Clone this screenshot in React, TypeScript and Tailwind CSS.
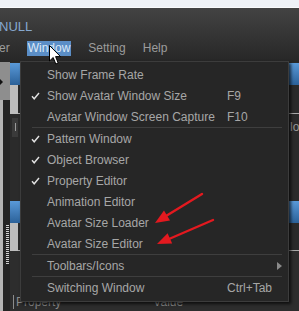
import React from "react";

type Item =
  | { sep: true }
  | { label: string; check?: boolean; sc?: string; sub?: boolean };

const items: Item[] = [
  { label: "Show Frame Rate" },
  { label: "Show Avatar Window Size", check: true, sc: "F9" },
  { label: "Avatar Window Screen Capture", sc: "F10" },
  { sep: true },
  { label: "Pattern Window", check: true },
  { label: "Object Browser", check: true },
  { label: "Property Editor", check: true },
  { label: "Animation Editor" },
  { label: "Avatar Size Loader" },
  { label: "Avatar Size Editor" },
  { sep: true },
  { label: "Toolbars/Icons", sub: true },
  { sep: true },
  { label: "Switching Window", sc: "Ctrl+Tab" },
];

function Check() {
  return (
    <svg width="9" height="8" viewBox="0 0 9 8">
      <path d="M1 4.2 L3.2 6.8 L8 1" fill="none" stroke="#e2e2e2" strokeWidth="1.4" />
    </svg>
  );
}

export default function App() {
  return (
    <div
      className="relative w-[299px] h-[311px] overflow-hidden bg-[#2a2a2a] flex flex-col"
      style={{ fontFamily: '"Liberation Sans", Arial, sans-serif' }}
    >
      {/* top light strip */}
      <div className="h-[7px] bg-[#eef1f6]" />
      <div className="h-px bg-[#f9fafc]" />
      {/* header */}
      <div className="h-[54px] bg-gradient-to-b from-[#434343] to-[#272727] flex flex-col">
        <div className="pt-[11px] pl-0 text-[13px] leading-[16px] text-[#86a8cf] -ml-px">NULL</div>
        <div className="mt-[6px] flex items-center gap-[17px] text-[12px] leading-[15px] text-[#9c9c9c]">
          <span className="-ml-px">er</span>
          <span className="bg-[#5b8ec6] text-[#dce9f7] px-[1px] h-[15px]">Window</span>
          <span>Setting</span>
          <span>Help</span>
        </div>
      </div>
      {/* body */}
      <div className="flex-1 flex flex-row">
        <div className="w-[11px] flex flex-col">
          <div className="h-[38px] w-[10px] bg-[#8e8e8e] flex items-center">
            <div className="mt-[2px] w-0 h-0 border-y-[3px] border-y-transparent border-l-[3px] border-l-[#111]" />
          </div>
          <div className="flex-1 flex flex-row">
            <div className="w-[3px] bg-[#b4b4b4]" />
            <div className="flex-1 bg-[#242424] flex flex-col">
              <div className="mt-[125px] ml-[3px] w-[3px] h-[40px] bg-[repeating-linear-gradient(to_bottom,#cfcfcf_0px,#cfcfcf_1px,transparent_1px,transparent_2px)]" />
            </div>
          </div>
        </div>
        <div className="flex-1 flex flex-col">
          <div className="mt-px h-[22px] bg-gradient-to-b from-[#5a9ad9] to-[#2b6199]" />
          <div className="h-[29px] flex flex-row">
            <div className="w-[8px] bg-[#bdbdbd]" />
            <div className="flex-1 border-b border-[#a9a9a9]" />
          </div>
          <div className="h-[26px] flex flex-row items-center">
            <div className="ml-[2px] w-[6px] h-[19px] bg-[#3a3a3a] flex items-center justify-center">
              <div className="w-px h-[8px] bg-[#9a9a9a]" />
            </div>
            <span className="ml-[272px] text-[12px] text-[#9a9a9a] whitespace-nowrap">lo</span>
          </div>
          <div className="flex-1 bg-[#2b2b2b]" />
          <div className="h-[22px] bg-gradient-to-b from-[#5a9ad9] to-[#2b6199]" />
          <div className="h-[28px] flex flex-row">
            <div className="w-[8px] bg-[#bdbdbd]" />
            <div className="flex-1 border-b border-[#a9a9a9]" />
          </div>
          <div className="flex-1 flex flex-row items-end pb-0 text-[12px] leading-[14px] text-[#8c8c8c] bg-[#2d2d2d]">
            <div className="ml-[3px] w-px h-[14px] bg-[#8c8c8c] mb-[2px]" />
            <span className="ml-[2px] mb-[2px]">Property</span>
            <span className="ml-[92px] mb-[2px]">Value</span>
          </div>
        </div>
      </div>

      {/* dropdown menu */}
      <div className="absolute left-[20px] top-[61px] w-[269px] bg-[#262626] border border-[#3c3c3c] pt-[2px] pb-[3px] shadow-[2px_2px_3px_rgba(0,0,0,0.7)] text-[12px] text-[#a6a6a6]">
        {items.map((it, i) =>
          "sep" in it ? (
            <div key={i} className="h-px ml-[11px] mr-[6px] bg-[#3e3e3e]" />
          ) : (
            <div key={i} className="h-[21px] flex flex-row items-center whitespace-nowrap">
              <div className="w-[26px] pl-[10px] flex items-center">{it.check ? <Check /> : null}</div>
              <span className="w-[180px]">{it.label}</span>
              {it.sc ? <span>{it.sc}</span> : null}
              {it.sub ? (
                <div className="ml-auto mr-[6px] w-0 h-0 border-y-[4px] border-y-transparent border-l-[5px] border-l-[#8a8a8a]" />
              ) : null}
            </div>
          )
        )}
      </div>

      {/* red arrows */}
      <svg className="absolute left-0 top-0 pointer-events-none" width="299" height="311" viewBox="0 0 299 311">
        <line x1="202" y1="194" x2="166" y2="216" stroke="#e3191f" strokeWidth="2.4" strokeLinecap="round" />
        <polygon points="155,223 170,220.5 164,210.5" fill="#e3191f" />
        <line x1="213" y1="220" x2="169" y2="239" stroke="#e3191f" strokeWidth="2.4" strokeLinecap="round" />
        <polygon points="157,244 172.2,243.6 167.6,233.2" fill="#e3191f" />
      </svg>

      {/* mouse cursor */}
      <svg className="absolute left-[49px] top-[45px] pointer-events-none" width="13" height="21" viewBox="0 0 13 21">
        <path
          d="M0.5 0.5 L0.5 16 L4.2 12.5 L6.8 19 L9.2 18 L6.6 11.6 L11.5 11.6 Z"
          fill="#ffffff"
          stroke="#000000"
          strokeWidth="1"
          strokeLinejoin="round"
        />
      </svg>
    </div>
  );
}
